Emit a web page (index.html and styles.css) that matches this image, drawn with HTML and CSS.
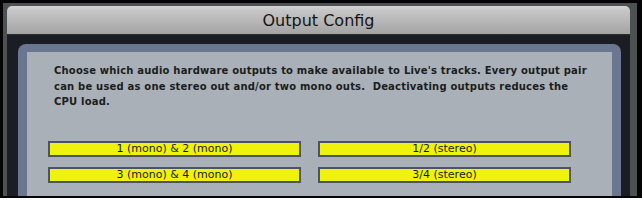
FILE: index.html
```html
<!DOCTYPE html>
<html lang="en">
<head>
    <meta charset="UTF-8">
    <title>Output Config</title>
    <link rel="stylesheet" href="styles.css">
</head>
<body>
<div class="window">
    <div class="bezel">
        <div class="title-bar">Output Config</div>
        <div class="well">
            <div class="panel">
                <p class="info">Choose which audio hardware outputs to make available to Live's tracks. Every output pair can be used as one stereo out and/or two mono outs.&nbsp; Deactivating outputs reduces the<br>CPU load.</p>
                <div class="outputs">
                    <button class="output-button">1 (mono) &amp; 2 (mono)</button>
                    <button class="output-button">1/2 (stereo)</button>
                    <button class="output-button">3 (mono) &amp; 4 (mono)</button>
                    <button class="output-button">3/4 (stereo)</button>
                </div>
            </div>
        </div>
    </div>
</div>
</body>
</html>
```

FILE: styles.css
```css
body {
    margin: 0;
    background-color: #ffffff;
    font-family: "DejaVu Sans", sans-serif;
    overflow: hidden;
}

.window {
    width: 642px;
    height: 198px;
    box-sizing: border-box;
    background-color: #050505;
    padding: 3px 5px 2px 3px;
}

.bezel {
    height: 100%;
    background-color: #4d5151;
    padding: 3px 7px 0 4px;
    box-sizing: border-box;
    display: flex;
    flex-direction: column;
}

.title-bar {
    height: 29px;
    flex: none;
    border-radius: 5px 5px 0 0;
    background: linear-gradient(#d4d4d4, #c6c6c6 15%, #a4a4a4);
    border-bottom: 1px solid #2a2c30;
    box-sizing: border-box;
    display: flex;
    justify-content: center;
    align-items: center;
    padding-top: 1px;
    font-size: 16px;
    color: #141414;
}

.well {
    flex: 1;
    background-color: #1a1d24;
    padding: 9px 9px 0 11px;
    display: flex;
}

.panel {
    flex: 1;
    background-color: #6b7691;
    border-radius: 8px 8px 0 0;
    padding: 8px 9px 0 9px;
    display: flex;
    flex-direction: column;
}

.info {
    margin: 0;
    padding: 11px 10px 0 27px;
    background-color: #a9b0b8;
    font-size: 10px;
    font-weight: bold;
    letter-spacing: 0.2px;
    line-height: 15.5px;
    color: #1b1d20;
}

.outputs {
    flex: 1;
    background-color: #a9b0b8;
    padding: 31px 41px 0 21px;
    display: grid;
    grid-template-columns: 253px 253px;
    grid-auto-rows: 16px;
    column-gap: 17px;
    row-gap: 10px;
    align-content: start;
}

.output-button {
    height: 16px;
    box-sizing: border-box;
    background-color: #eef20c;
    border: 2px solid #4a5264;
    padding: 0;
    font-family: "DejaVu Sans", sans-serif;
    font-size: 11px;
    color: #1a1a14;
    line-height: 12px;
}
```
